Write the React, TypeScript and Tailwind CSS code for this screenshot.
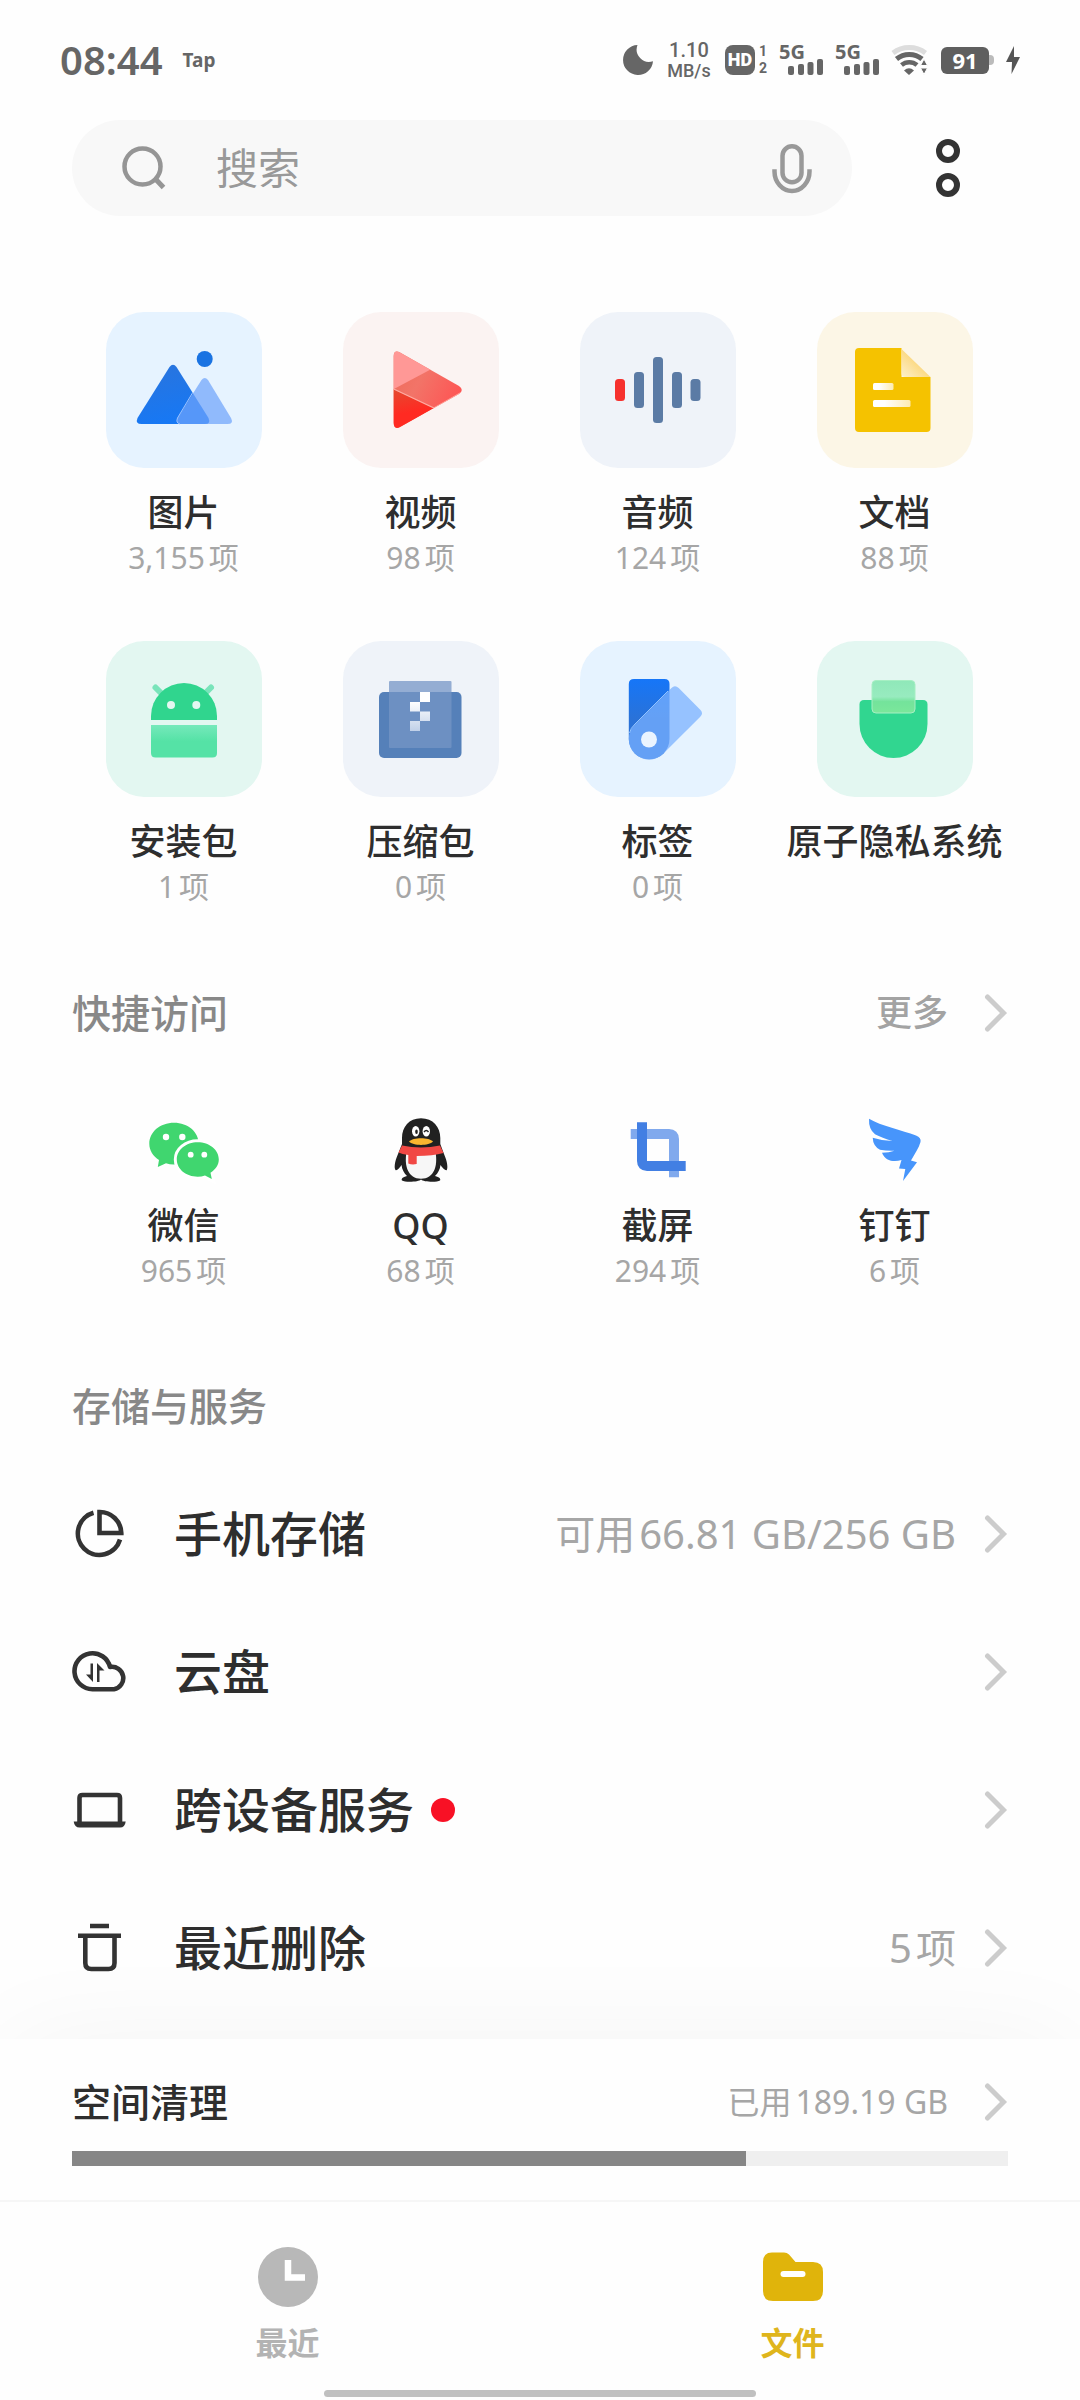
import type { ReactNode } from "react";

function Moon() {
  return (
    <svg className="h-[30px] w-[30px]" viewBox="0 0 30 30" aria-hidden="true">
      <path d="M14.5 0A15 15 0 1 0 30 16.2 12.4 12.4 0 0 1 14.5 0Z" fill="#666" />
    </svg>
  );
}

function Signal() {
  return (
    <div className="relative h-[30px] w-[44px]">
      <span className="absolute -top-1 left-0 text-[20px] leading-[22px] font-bold">5G</span>
      <svg className="h-full w-full" viewBox="0 0 44 30" fill="#666" aria-hidden="true">
        <rect x="9" y="21" width="6" height="9" rx="2" />
        <rect x="19" y="19" width="6" height="11" rx="2" />
        <rect x="28.500" y="17" width="6" height="13" rx="2" />
        <rect x="38" y="14" width="6" height="16" rx="2" />
      </svg>
    </div>
  );
}

function Wifi() {
  return (
    <svg className="h-[30px] w-[38px]" viewBox="0 0 38 30" fill="none" aria-hidden="true">
      <path d="M2 8A27 27 0 0 1 34.500 8" stroke="#ddd" strokeWidth="5" />
      <path d="M5.500 14A20 20 0 0 1 31 14" stroke="#666" strokeWidth="5" />
      <path d="M10.500 20A12 12 0 0 1 26 20" stroke="#666" strokeWidth="4.500" />
      <path d="M13 25.500Q18 21 23 25.500L18 30Z" fill="#666" />
      <path d="M29.500 20.500L33 14L36.500 20.500ZM29.500 23H36.500L33 29.500Z" fill="#666" stroke="#fff" strokeWidth="1" />
    </svg>
  );
}

function StatusBar() {
  return (
    <header className="flex h-[120px] items-center justify-between px-[60px] text-[#666]">
      <div className="flex items-center gap-5">
        <time className="text-[40px] leading-[48px] font-semibold">08:44</time>
        <span className="text-[19px] leading-6 font-bold">Tap</span>
      </div>
      <div className="flex items-center gap-3">
        <Moon />
        <div className="flex w-[48px] flex-col items-center font-['Roboto'] font-medium">
          <span className="text-[20px] leading-[22px]">1.10</span>
          <span className="text-[18px] leading-[20px]">MB/s</span>
        </div>
        <div className="flex items-center gap-1">
          <span className="flex h-[30px] w-[30px] items-center justify-center rounded-lg bg-[#666] font-['Roboto'] text-[18px] leading-5 font-black text-white">
            HD
          </span>
          <span className="flex flex-col font-['Roboto'] text-[14px] leading-[17px] font-bold">
            <span>1</span>
            <span>2</span>
          </span>
        </div>
        <Signal />
        <Signal />
        <Wifi />
        <div className="flex items-center">
          <span className="flex h-[27px] w-[48px] items-center justify-center rounded-md bg-[#5f5f5f] text-[22px] leading-6 font-bold text-white">91</span>
          <span className="h-[10px] w-[5px] rounded-r bg-[#bbb]" />
        </div>
        <svg className="h-[28px] w-[14px]" viewBox="0 0 14 28" aria-hidden="true">
          <path d="M8 0L0 16H6L5.500 28L14 11H8Z" fill="#555" />
        </svg>
      </div>
    </header>
  );
}

function SearchBar() {
  return (
    <div className="flex items-center pr-[120px] pl-[72px]">
      <label className="flex h-24 min-w-0 flex-1 items-center rounded-full bg-[#f8f8f8] pr-[36px] pl-[48px]">
        <svg className="h-[48px] w-[48px] shrink-0" viewBox="0 0 48 48" fill="none" stroke="#959595" strokeWidth="4.500" aria-hidden="true">
          <circle cx="22.500" cy="22.500" r="18" />
          <path d="M35 34.500L43.500 43.500" strokeWidth="5" />
        </svg>
        <input
          type="search"
          aria-label="搜索"
          placeholder="搜索"
          className="ml-[48px] min-w-0 flex-1 bg-transparent text-[42px] leading-[56px] text-[#333] outline-none placeholder:text-[#999]"
        />
        <button type="button" aria-label="语音搜索">
          <svg className="h-[52px] w-[48px]" viewBox="0 0 48 52" fill="none" stroke="#999" strokeWidth="4.500" aria-hidden="true">
            <rect x="14.500" y="4.300" width="19" height="36" rx="9.500" />
            <path d="M6.500 29.500A17.500 19.500 0 0 0 41.500 29.500" strokeLinecap="square" />
          </svg>
        </button>
      </label>
      <button type="button" aria-label="更多选项" className="ml-[84px]">
        <svg className="h-[60px] w-[24px]" viewBox="0 0 24 60" fill="none" stroke="#333" strokeWidth="6" aria-hidden="true">
          <circle cx="12" cy="13" r="9" />
          <circle cx="12" cy="47" r="9" />
        </svg>
      </button>
    </div>
  );
}

function TileArt({ children }: { children: ReactNode }) {
  return (
    <svg className="h-full w-full" viewBox="0 0 156 156" aria-hidden="true">
      {children}
    </svg>
  );
}

const pictureArt = (
  <TileArt>
    <defs>
      <linearGradient id="peak" x1="0" y1="0" x2="0.300" y2="1">
        <stop offset="0" stopColor="#2a74dc" />
        <stop offset="1" stopColor="#1778f4" />
      </linearGradient>
    </defs>
    <path d="M63.500 55Q67 50.500 70.500 55L102.500 106Q105 112 99 112H35.500Q29 112 31.500 106Z" fill="url(#peak)" />
    <path d="M95.500 68Q98.700 64 102 68L125 106Q128 112 121.500 112H75Q69 112 71.500 106Z" fill="#6fa4fb" fillOpacity="0.720" />
    <path d="M87 80L71.500 106Q69.500 111 74 112" fill="none" stroke="#9cc3ff" strokeWidth="1" />
    <circle cx="98.700" cy="47" r="8" fill="#1a73e2" />
  </TileArt>
);

const videoArt = (
  <TileArt>
    <defs>
      <clipPath id="play">
        <path d="M50.700 44Q51 37.500 57 40.500L116 74Q121.500 78 116 82L57 115Q51 118 50.700 111Z" />
      </clipPath>
      <linearGradient id="playMid" x1="0" y1="0" x2="1" y2="0.600">
        <stop offset="0" stopColor="#ee6a58" />
        <stop offset="0.450" stopColor="#f27468" />
        <stop offset="1" stopColor="#ff5252" />
      </linearGradient>
      <linearGradient id="playLow" x1="0" y1="0" x2="0.200" y2="1">
        <stop offset="0" stopColor="#e44a30" />
        <stop offset="0.600" stopColor="#ff2a22" />
      </linearGradient>
    </defs>
    <g clipPath="url(#play)">
      <rect x="50" y="37" width="70" height="81" fill="url(#playMid)" />
      <path d="M50 37H60L88.500 57L50 77.500Z" fill="#ff9896" />
      <path d="M50 77L91 96L50 120Z" fill="url(#playLow)" />
      <path d="M50.700 77L91 96L119 80" fill="none" stroke="#ffa9a0" strokeWidth="1.300" />
    </g>
  </TileArt>
);

const audioArt = (
  <TileArt>
    <rect x="35" y="67" width="10" height="22" rx="3.500" fill="#f6312e" />
    <g fill="#5b7ba5">
      <rect x="54" y="60" width="10" height="36" rx="3.500" />
      <rect x="73" y="45" width="10" height="66" rx="3.500" />
      <rect x="92" y="60" width="10" height="36" rx="3.500" />
      <rect x="110.500" y="67" width="10" height="22" rx="3.500" />
    </g>
  </TileArt>
);

const documentArt = (
  <TileArt>
    <defs>
      <linearGradient id="fold" x1="0.600" y1="0.400" x2="0" y2="1">
        <stop offset="0" stopColor="#fbd678" />
        <stop offset="1" stopColor="#fdf0cc" />
      </linearGradient>
      <linearGradient id="rule" x1="0" y1="0" x2="1" y2="0">
        <stop offset="0.300" stopColor="#fff" />
        <stop offset="1" stopColor="#fdebb0" />
      </linearGradient>
    </defs>
    <path d="M42 36H84.500V65H113.500V116Q113.500 120 109.500 120H42Q38 120 38 116V40Q38 36 42 36Z" fill="#f5c200" />
    <path d="M84.500 37L113.500 65H88.500Q84.500 65 84.500 61Z" fill="url(#fold)" />
    <rect x="56" y="71" width="20.500" height="7" rx="1.500" fill="url(#rule)" />
    <rect x="56" y="88" width="37.500" height="7" rx="1.500" fill="url(#rule)" />
  </TileArt>
);

const packageArt = (
  <TileArt>
    <defs>
      <linearGradient id="robot" x1="0" y1="0" x2="0" y2="1">
        <stop offset="0" stopColor="#76e9bb" />
        <stop offset="0.500" stopColor="#55e2a6" />
      </linearGradient>
    </defs>
    <path d="M49.500 46.500L56 53M105 46.500L98.500 53" stroke="#79e4ba" strokeWidth="6" strokeLinecap="round" />
    <path d="M45 79V75A33 33 0 0 1 111 75V79Z" fill="#30d58e" />
    <circle cx="65" cy="64" r="4" fill="#e3f7f1" />
    <circle cx="90.300" cy="64" r="4" fill="#e3f7f1" />
    <path d="M45 84H111V112Q111 116.500 106.500 116.500H49.500Q45 116.500 45 112Z" fill="url(#robot)" />
  </TileArt>
);

const archiveArt = (
  <TileArt>
    <defs>
      <linearGradient id="zip" x1="0" y1="0" x2="0" y2="1">
        <stop offset="0.250" stopColor="#fff" />
        <stop offset="1" stopColor="#c0d0e8" />
      </linearGradient>
    </defs>
    <rect x="36" y="51" width="82.500" height="66" rx="5" fill="#5580b9" />
    <rect x="46" y="40" width="62.500" height="67" rx="1" fill="#7595c6" fillOpacity="0.750" />
    <path d="M77 51H87V61H77V70.500H87V80H77V90H67V80H77V70.500H67V61H77Z" fill="url(#zip)" />
  </TileArt>
);

const tagArt = (
  <TileArt>
    <defs>
      <linearGradient id="tag" x1="0" y1="0" x2="0" y2="1">
        <stop offset="0" stopColor="#1676f8" />
        <stop offset="0.500" stopColor="#2a72d8" />
      </linearGradient>
    </defs>
    <path d="M54 38H84.500Q89.500 38 89.500 43V98A20.300 20.300 0 0 1 48.800 98V43Q48.800 38 54 38Z" fill="url(#tag)" />
    <path
      d="M54 41H84.500Q89.500 41 89.500 46V98A20.300 20.300 0 0 1 48.800 98V46Q48.800 41 54 41Z"
      transform="rotate(45 69 98)"
      fill="#7ab1ff"
      fillOpacity="0.740"
    />
    <path d="M49.500 92Q50.500 87 55 83L88 50" fill="none" stroke="#93c4ff" strokeWidth="1" />
    <circle cx="69" cy="98.500" r="8" fill="#eaf4ff" />
  </TileArt>
);

const privacyArt = (
  <TileArt>
    <defs>
      <linearGradient id="card" x1="0" y1="0" x2="0" y2="1">
        <stop offset="0" stopColor="#8fe8b9" />
        <stop offset="0.500" stopColor="#98ebbf" />
        <stop offset="0.650" stopColor="#74e39b" />
        <stop offset="1" stopColor="#7be79b" />
      </linearGradient>
    </defs>
    <path d="M47 59H106Q110.500 59 110.500 63.500V83A34 34 0 0 1 42.500 83V63.500Q42.500 59 47 59Z" fill="#31d690" />
    <rect x="55" y="39.500" width="43" height="32.500" rx="4" fill="url(#card)" stroke="#a6efc3" strokeWidth="1" />
  </TileArt>
);

const wechatArt = (
  <svg className="h-[72px] w-[72px]" viewBox="0 0 72 72" aria-hidden="true">
    <path d="M26 8.700C12 8.700 1.300 18 1.300 29.700C1.300 36.500 5 42 11 46L9.800 53L18 49.300Q22 50.700 27 50.500C42 50 50.700 40 50.700 29.700C50.700 18 40 8.700 26 8.700Z" fill="#40d66f" />
    <path
      d="M49.700 28.300C38 28.300 28.800 36 28.800 45.500C28.800 55 38 62.700 49.700 62.700Q53.500 62.700 57 61.500L63.800 65L62.500 58.700C67.500 55.500 70.800 51 70.800 45.500C70.800 36 61.500 28.300 49.700 28.300Z"
      fill="#40d66f"
      stroke="#fff"
      strokeWidth="6"
      paintOrder="stroke"
    />
    <g fill="#fff">
      <circle cx="18" cy="23" r="3.200" />
      <circle cx="34.300" cy="23" r="3.200" />
      <circle cx="42.700" cy="40.700" r="2.900" />
      <circle cx="56.300" cy="40.700" r="2.900" />
    </g>
  </svg>
);

const qqArt = (
  <svg className="h-[72px] w-[72px]" viewBox="0 0 72 72" aria-hidden="true">
    <g fill="#212121">
      <path d="M36 4.300C24 4.300 17 13 17 24V30L13 40C9.500 48 9 54 10.500 56C12 57 15 53.500 16.500 51C17 55.500 19 59 22 62C17.500 63 16 65 17 66.500C20 68.500 34 68 36 65.500C38 68 52 68.500 55 66.500C56 65 54.500 63 50 62C53 59 55 55.500 55.500 51C57 53.500 60.500 57 61.800 56C63 54 62.500 48 59 40L55.300 30V24C55.300 13 48 4.300 36 4.300Z" />
    </g>
    <path d="M21.500 38C19 52 23 64.700 36 64.700C49 64.700 53 52 50.500 38Z" fill="#f7f7f7" />
    <path d="M17 31.500Q36 35.500 55 31.500L58.500 39Q48 42 31.700 42V50Q27 51 23.300 49.500V41Q17 40 13.500 38.500Z" fill="#f14844" />
    <path d="M24 27.500C28 23 44 23 48 27.500C44 32 28 32 24 27.500Z" fill="#fbb62f" />
    <ellipse cx="30.700" cy="17.300" rx="3.700" ry="5.200" fill="#fff" />
    <ellipse cx="41.300" cy="17.300" rx="3.700" ry="5.200" fill="#fff" />
    <ellipse cx="31.500" cy="17.800" rx="1.300" ry="2.300" fill="#212121" />
    <path d="M39 18Q41.300 15 43.500 18" fill="none" stroke="#212121" strokeWidth="1.400" />
  </svg>
);

const screenshotArt = (
  <svg className="h-[72px] w-[72px]" viewBox="0 0 72 72" fill="none" strokeWidth="10" aria-hidden="true">
    <path d="M8.700 20H47Q52 20 52 25V63.300" stroke="#80a9ed" />
    <path d="M20 8.300V47Q20 52 25 52H63.700" stroke="#427fe3" />
  </svg>
);

const dingtalkArt = (
  <svg className="h-[72px] w-[72px]" viewBox="0 0 72 72" aria-hidden="true">
    <path
      d="M10 4.700C22 12 43 16 57 21.500Q62.500 23.500 61.500 28C60 34 55.500 40 52 46.500L58 48.300L44 67L46.300 55L40 54.500L42.500 46C35 48.500 26 47 23 38.700Q30 38.500 35.500 36.700Q28 37 21 35.800Q14 32 13.700 23.700Q24 27 33.500 27Q23 24 16 20.300Q9.500 15 10 4.700Z"
      fill="#4795fb"
    />
  </svg>
);

type Category = { name: string; count?: string; tint?: string; art: ReactNode };

const categories: Category[] = [
  { name: "图片", count: "3,155", tint: "bg-[#e6f3ff]", art: pictureArt },
  { name: "视频", count: "98", tint: "bg-[#fbf3f2]", art: videoArt },
  { name: "音频", count: "124", tint: "bg-[#eff3f9]", art: audioArt },
  { name: "文档", count: "88", tint: "bg-[#fcf6e6]", art: documentArt },
  { name: "安装包", count: "1", tint: "bg-[#e3f7f1]", art: packageArt },
  { name: "压缩包", count: "0", tint: "bg-[#eff3f9]", art: archiveArt },
  { name: "标签", count: "0", tint: "bg-[#e6f3ff]", art: tagArt },
  { name: "原子隐私系统", tint: "bg-[#e3f7f1]", art: privacyArt },
];

const shortcuts: Category[] = [
  { name: "微信", count: "965", art: wechatArt },
  { name: "QQ", count: "68", art: qqArt },
  { name: "截屏", count: "294", art: screenshotArt },
  { name: "钉钉", count: "6", art: dingtalkArt },
];

function Count({ value }: { value: string }) {
  return (
    <span className="flex justify-center gap-1 text-[30px] leading-[44px] text-[#a6a6a6]">
      <span>{value}</span>
      <span>项</span>
    </span>
  );
}

function Name({ children }: { children: ReactNode }) {
  return <span className="text-[36px] leading-[46px] font-medium whitespace-nowrap text-[#2e2e2e]">{children}</span>;
}

function Chevron() {
  return (
    <svg className="h-[40px] w-[24px]" viewBox="0 0 24 40" fill="none" stroke="#ccc" strokeWidth="5" aria-hidden="true">
      <path d="M3.500 4L19.500 20L3.500 36" strokeLinecap="round" />
    </svg>
  );
}

const pieIcon = (
  <>
    <path d="M21.500 6.800A21.500 21.500 0 1 0 48 33.500" />
    <path d="M27.500 6V27H49.300A21.500 21.500 0 0 0 27.500 6Z" />
  </>
);

const cloudIcon = (
  <>
    <path d="M20.500 45.200A18 18 0 1 1 38 23A11.200 11.200 0 1 1 42 45.200Z" strokeLinejoin="round" />
    <path d="M18.500 19.500H21V38L14 30.500H18.500ZM25 38V19L32.500 26.500H27.500V38Z" fill="#333" stroke="none" />
  </>
);

const laptopIcon = (
  <>
    <path d="M7.500 40V16Q7.500 13 10.500 13H45Q48 13 48 16V40" />
    <path d="M1.700 39.500H53.700Q53 45.500 48 45.500H7.500Q2.500 45.500 1.700 39.500Z" fill="#333" stroke="none" />
  </>
);

const trashIcon = (
  <>
    <path d="M18 6H37M6 15.800H49" />
    <path d="M13.300 16V43Q13.300 49 19.300 49H36.500Q42.500 49 42.500 43V16" />
  </>
);

const services: { name: string; icon: ReactNode; detail?: ReactNode; badge?: boolean }[] = [
  {
    name: "手机存储",
    icon: pieIcon,
    detail: (
      <>
        <span>可用</span>
        <span>66.81 GB/256 GB</span>
      </>
    ),
  },
  { name: "云盘", icon: cloudIcon },
  { name: "跨设备服务", icon: laptopIcon, badge: true },
  {
    name: "最近删除",
    icon: trashIcon,
    detail: (
      <>
        <span>5</span>
        <span>项</span>
      </>
    ),
  },
];

export default function App() {
  return (
    <div lang="zh-CN" className="flex min-h-screen flex-col overflow-hidden bg-[#fefefe] font-['Noto_Sans','Noto_Sans_CJK_SC',sans-serif]">
      <StatusBar />
      <SearchBar />

      <main>
        <ul className="mt-24 grid grid-cols-4 gap-y-[61px] pr-[67px] pl-[65px]">
          {categories.map((c) => (
            <li key={c.name}>
              <button type="button" className="flex w-full flex-col items-center">
                <span className={`mb-[22px] h-[156px] w-[156px] rounded-[38px] ${c.tint}`}>{c.art}</span>
                <Name>{c.name}</Name>
                {c.count && <Count value={c.count} />}
              </button>
            </li>
          ))}
        </ul>

        <section>
          <div className="mt-[79px] flex h-[50px] items-center justify-between px-[72px]">
            <h2 className="text-[39px] leading-[50px] font-medium text-[#888]">快捷访问</h2>
            <button type="button" className="flex items-center gap-9 text-[36px] leading-[50px] font-medium text-[#a3a3a3]">
              更多
              <Chevron />
            </button>
          </div>
          <ul className="mt-[76px] grid grid-cols-4 pr-[67px] pl-[65px]">
            {shortcuts.map((s) => (
              <li key={s.name}>
                <button type="button" className="flex w-full flex-col items-center">
                  <span className="mb-[17px]">{s.art}</span>
                  <Name>{s.name}</Name>
                  {s.count && <Count value={s.count} />}
                </button>
              </li>
            ))}
          </ul>
        </section>

        <section>
          <h2 className="mt-[88px] px-[72px] text-[39px] leading-[50px] font-medium text-[#888]">存储与服务</h2>
          <ul className="mt-[34px]">
            {services.map((s) => (
              <li key={s.name}>
                <button type="button" className="flex h-[138px] w-full items-center px-[72px]">
                  <svg className="h-[56px] w-[56px]" viewBox="0 0 56 56" fill="none" stroke="#333" strokeWidth="4.600" aria-hidden="true">
                    {s.icon}
                  </svg>
                  <span className="ml-[46px] text-[48px] leading-[60px] font-medium text-[#2e2e2e]">{s.name}</span>
                  {s.badge && <span className="ml-[17px] h-6 w-6 rounded-full bg-[#f81125]" />}
                  <span className="ml-auto flex gap-1 text-[40px] leading-[50px] text-[#a6a6a6]">{s.detail}</span>
                  <span className="ml-7">
                    <Chevron />
                  </span>
                </button>
              </li>
            ))}
          </ul>
        </section>
      </main>

      <footer className="mt-[22px] flex-1 bg-[#fefefe] shadow-[0_0_110px_-10px_rgba(0,0,0,0.05)]">
        <div className="px-[72px] pt-[38px] pb-[34px]">
          <button type="button" className="flex w-full items-center justify-between text-left">
            <span className="text-[39px] leading-[50px] font-medium text-[#2e2e2e]">空间清理</span>
            <span className="flex items-center gap-9 text-[32px] leading-[50px] text-[#a6a6a6]">
              <span className="flex gap-1">
                <span>已用</span>
                <span>189.19 GB</span>
              </span>
              <Chevron />
            </span>
          </button>
          <div role="progressbar" aria-label="空间使用" aria-valuenow={72} aria-valuemin={0} aria-valuemax={100} className="mt-6 h-[15px] bg-[#efefef]">
            <div className="h-full w-[72%] bg-[#868686]" />
          </div>
        </div>
        <nav className="grid grid-cols-2 border-t-2 border-[#f6f6f6] px-[35px] pt-[44px]">
          <button type="button" className="flex flex-col items-center">
            <svg className="h-[62px] w-[62px]" viewBox="0 0 62 62" aria-hidden="true">
              <circle cx="31" cy="31" r="30" fill="#b8b8b8" />
              <path d="M31 14V31.500H48" fill="none" stroke="#fff" strokeWidth="6.500" />
            </svg>
            <span className="mt-3 text-[32px] leading-[46px] font-bold text-[#b3b3b3]">最近</span>
          </button>
          <button type="button" aria-current="page" className="flex flex-col items-center">
            <svg className="h-[62px] w-[62px]" viewBox="0 0 62 62" aria-hidden="true">
              <path d="M10 6.500H22Q25 6.500 27 8.500L33.500 16H51Q61 16 61 26V45Q61 55 51 55H11Q1 55 1 45V16Q1 6.500 10 6.500Z" fill="#e0b40b" />
              <rect x="18.500" y="25" width="25" height="6" rx="3" fill="#fff" />
            </svg>
            <span className="mt-3 text-[32px] leading-[46px] font-bold text-[#dfb51c]">文件</span>
          </button>
        </nav>
        <div className="mx-auto mt-[24px] h-[7px] w-2/5 rounded-full bg-[#c0c0c0]" />
      </footer>
    </div>
  );
}
